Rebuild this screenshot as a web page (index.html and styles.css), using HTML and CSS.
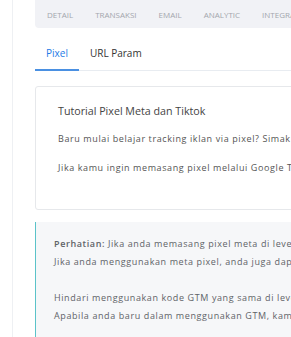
FILE: index.html
```html
<!DOCTYPE html>
<html lang="id">

<head>
    <meta charset="UTF-8">
    <meta name="viewport" content="width=device-width, initial-scale=1.0">
    <title>Pengaturan Pixel</title>
    <link rel="stylesheet" href="styles.css">
</head>

<body>
    <div class="page">
        <div class="main">
            <nav class="top-tabs">
                <a href="javascript:;" class="top-tab">Detail</a>
                <a href="javascript:;" class="top-tab">Transaksi</a>
                <a href="javascript:;" class="top-tab">Email</a>
                <a href="javascript:;" class="top-tab">Analytic</a>
                <a href="javascript:;" class="top-tab">Integrasi</a>
                <a href="javascript:;" class="top-tab">Lainnya</a>
            </nav>

            <div class="sub-tabs">
                <a href="javascript:;" class="sub-tab on">Pixel</a>
                <a href="javascript:;" class="sub-tab">URL Param</a>
            </div>

            <div class="card">
                <h3 class="card-title">Tutorial Pixel Meta dan Tiktok</h3>
                <p>Baru mulai belajar tracking iklan via pixel? Simak video tutorial berikut untuk memasang pixel Meta dan Tiktok.</p>
                <p>Jika kamu ingin memasang pixel melalui Google Tag Manager, silakan tonton tutorial GTM di bawah ini.</p>
            </div>

            <div class="notice">
                <b>Perhatian:</b> Jika anda memasang pixel meta di level produk, pixel di level toko tidak akan dijalankan.<br>
                Jika anda menggunakan meta pixel, anda juga dapat mengisi Conversion API untuk hasil yang lebih akurat.<br>
                <br>
                Hindari menggunakan kode GTM yang sama di level toko dan level produk agar event tidak tercatat ganda.<br>
                Apabila anda baru dalam menggunakan GTM, kami sarankan memakai pixel biasa terlebih dahulu.
            </div>
        </div>
    </div>
</body>

</html>
```

FILE: styles.css
```css
body {
    margin: 0;
    overflow: hidden;
    background: #fff;
    font-family: "Open Sans", "DejaVu Sans", sans-serif;
    color: #555;
}

.page {
    margin-left: 12px;
    padding-left: 22px;
    border-left: 1px solid #eef0f3;
    min-height: 337px;
    width: 1000px;
}

.main {
    width: 1000px;
}

.top-tabs {
    display: flex;
    height: 28px;
    align-items: center;
    padding-left: 1px;
    background: #f1f2f6;
    border-bottom-left-radius: 4px;
}

.top-tab {
    padding: 0 11px;
    font-size: 8px;
    text-transform: uppercase;
    color: #a3a6ad;
    text-decoration: none;
}

.sub-tabs {
    display: flex;
    margin-top: 8px;
    border-bottom: 1px solid #e8ecf1;
}

.sub-tab {
    padding: 10px 11px 9px;
    margin-bottom: -1px;
    font-size: 10px;
    line-height: 14px;
    color: #333;
    text-decoration: none;
    border-bottom: 2px solid transparent;
}

.sub-tab.on {
    color: #1e7be6;
    border-bottom-color: #4a90e2;
}

.card {
    margin-top: 15px;
    padding: 17px 22px 19px;
    border: 1px solid #e6e8eb;
    border-radius: 3px;
}

.card-title {
    margin: 0 0 14px;
    font-size: 10.7px;
    line-height: 14px;
    font-weight: normal;
    color: #444;
}

.card p {
    margin: 0 0 15px;
    font-size: 9px;
    line-height: 14px;
    letter-spacing: 0.6px;
    color: #555;
}

.notice {
    margin-top: 12px;
    padding: 13px 18px 14px;
    background: #f6f7f9;
    border-left: 1px solid #5bc3c9;
    font-size: 9px;
    line-height: 18px;
    letter-spacing: 0.6px;
    color: #5f6368;
}

.notice b {
    font-weight: 600;
}
```
